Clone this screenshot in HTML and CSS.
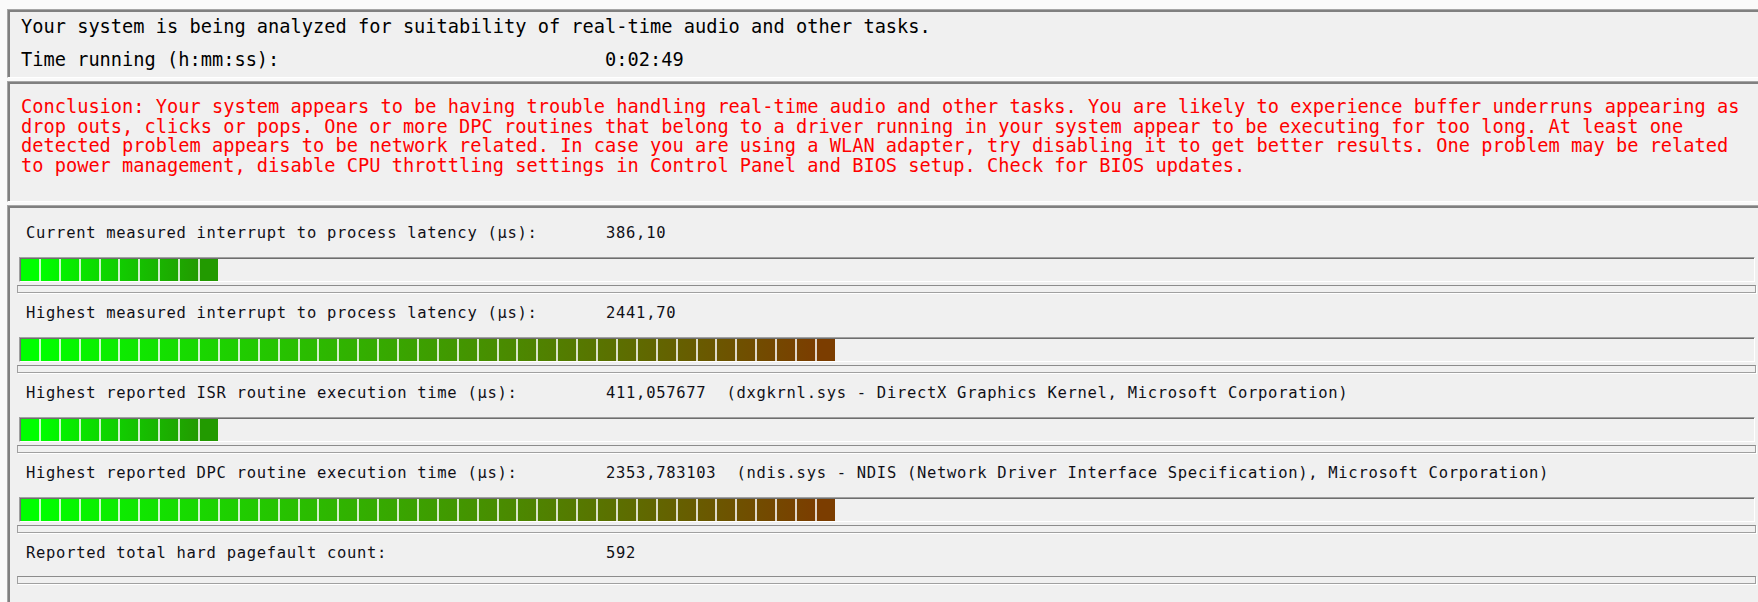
FILE: index.html
```html
<!DOCTYPE html>
<html lang="en">
<head>
<meta charset="utf-8">
<title>Latency analysis</title>
<link rel="stylesheet" href="styles.css">
</head>
<body>
  <section class="panel panel-status">
    <div class="status-line">Your system is being analyzed for suitability of real-time audio and other tasks.</div>
    <div class="status-row">
      <span>Time running (h:mm:ss):</span>
      <span>0:02:49</span>
    </div>
  </section>

  <section class="panel panel-conclusion">
    <p class="conclusion">Conclusion: Your system appears to be having trouble handling real-time audio and other tasks. You are likely to experience buffer underruns appearing as<br>drop outs, clicks or pops. One or more DPC routines that belong to a driver running in your system appear to be executing for too long. At least one<br>detected problem appears to be network related. In case you are using a WLAN adapter, try disabling it to get better results. One problem may be related<br>to power management, disable CPU throttling settings in Control Panel and BIOS setup. Check for BIOS updates.</p>
  </section>

  <section class="panel panel-metrics">
    <div class="metric">
      <div class="metric-label"><span>Current measured interrupt to process latency (µs):</span><span class="metric-value">386,10</span></div>
      <div class="bar"><div class="fill" style="--blocks:10; --end:#229a00"></div></div>
      <div class="thin"></div>
    </div>
    <div class="metric">
      <div class="metric-label"><span>Highest measured interrupt to process latency (µs):</span><span class="metric-value">2441,70</span></div>
      <div class="bar"><div class="fill" style="--blocks:41; --end:#7b3d00"></div></div>
      <div class="thin"></div>
    </div>
    <div class="metric">
      <div class="metric-label"><span>Highest reported ISR routine execution time (µs):</span><span class="metric-value">411,057677  (dxgkrnl.sys - DirectX Graphics Kernel, Microsoft Corporation)</span></div>
      <div class="bar"><div class="fill" style="--blocks:10; --end:#229a00"></div></div>
      <div class="thin"></div>
    </div>
    <div class="metric">
      <div class="metric-label"><span>Highest reported DPC routine execution time (µs):</span><span class="metric-value">2353,783103  (ndis.sys - NDIS (Network Driver Interface Specification), Microsoft Corporation)</span></div>
      <div class="bar"><div class="fill" style="--blocks:41; --end:#7b3d00"></div></div>
      <div class="thin"></div>
    </div>
    <div class="metric metric-nobar">
      <div class="metric-label"><span>Reported total hard pagefault count:</span><span class="metric-value">592</span></div>
      <div class="thin"></div>
    </div>
  </section>
</body>
</html>
```
FILE: styles.css
```css
html, body {
  margin: 0;
  padding: 0;
}

body {
  width: 1758px;
  height: 602px;
  overflow: hidden;
  background: #fafafa;
  padding: 9px 0 0 7px;
  box-sizing: border-box;
  font-family: "DejaVu Sans Mono", "Liberation Mono", monospace;
  color: #000;
}

.panel {
  background: #f0f0f0;
  border-top: 1px solid #a6a6a6;
  border-left: 1px solid #a6a6a6;
  border-bottom: 1px solid #ffffff;
  box-shadow: inset 2px 2px 0 #808080;
  margin-bottom: 3px;
}

/* status panel */
.panel-status {
  padding: 6px 0 7px 13px;
  font-size: 18.67px;
  line-height: 21px;
  display: flex;
  flex-direction: column;
  gap: 12px;
}

.status-row {
  display: grid;
  grid-template-columns: 584px auto;
}

/* conclusion panel */
.panel-conclusion {
  padding: 15px 0 26px 13px;
}

.conclusion {
  margin: 0;
  color: #ff0000;
  font-size: 18.67px;
  line-height: 19.5px;
  white-space: nowrap;
}

/* metrics panel */
.panel-metrics {
  padding: 17px 0 0 9px;
  border-bottom: none;
  height: 379px;
  margin-bottom: 0;
}

.metric + .metric {
  margin-top: 10px;
}

.metric-label {
  display: grid;
  grid-template-columns: 580px auto;
  padding-left: 9px;
  font-size: 15.5px;
  letter-spacing: 0.7px;
  line-height: 20px;
  color: #101018;
}

.metric-value {
  white-space: pre;
}

.bar {
  margin: 14px 3px 0 2px;
  padding: 1px 0 0 1px;
  height: 22px;
  background: #f0f0f0;
  border-top: 1px solid #a0a0a0;
  border-left: 1px solid #a0a0a0;
  border-right: 1px solid #ffffff;
  border-bottom: 1px solid #ffffff;
  box-shadow: inset 1px 1px 0 #6e6e6e;
}

.fill {
  position: relative;
  height: 22px;
  width: calc(var(--blocks) * 19.9px - 2px);
  background: linear-gradient(to right, #00ff00 0, #00ff00 18px, var(--end) calc(100% - 18px), var(--end) 100%);
}

.fill::after {
  content: "";
  position: absolute;
  inset: 0;
  background: repeating-linear-gradient(to right, transparent 0, transparent 17.9px, rgba(255, 255, 255, 0.78) 17.9px, rgba(255, 255, 255, 0.78) 19.9px);
}

.thin {
  margin: 3px 2px 0 0;
  height: 6px;
  background: #f0f0f0;
  border: 1px solid #a0a0a0;
  border-top-color: #8c8c8c;
  box-shadow: 1px 1px 0 #ffffff;
}

.metric-nobar .thin {
  margin-top: 13px;
}
```
